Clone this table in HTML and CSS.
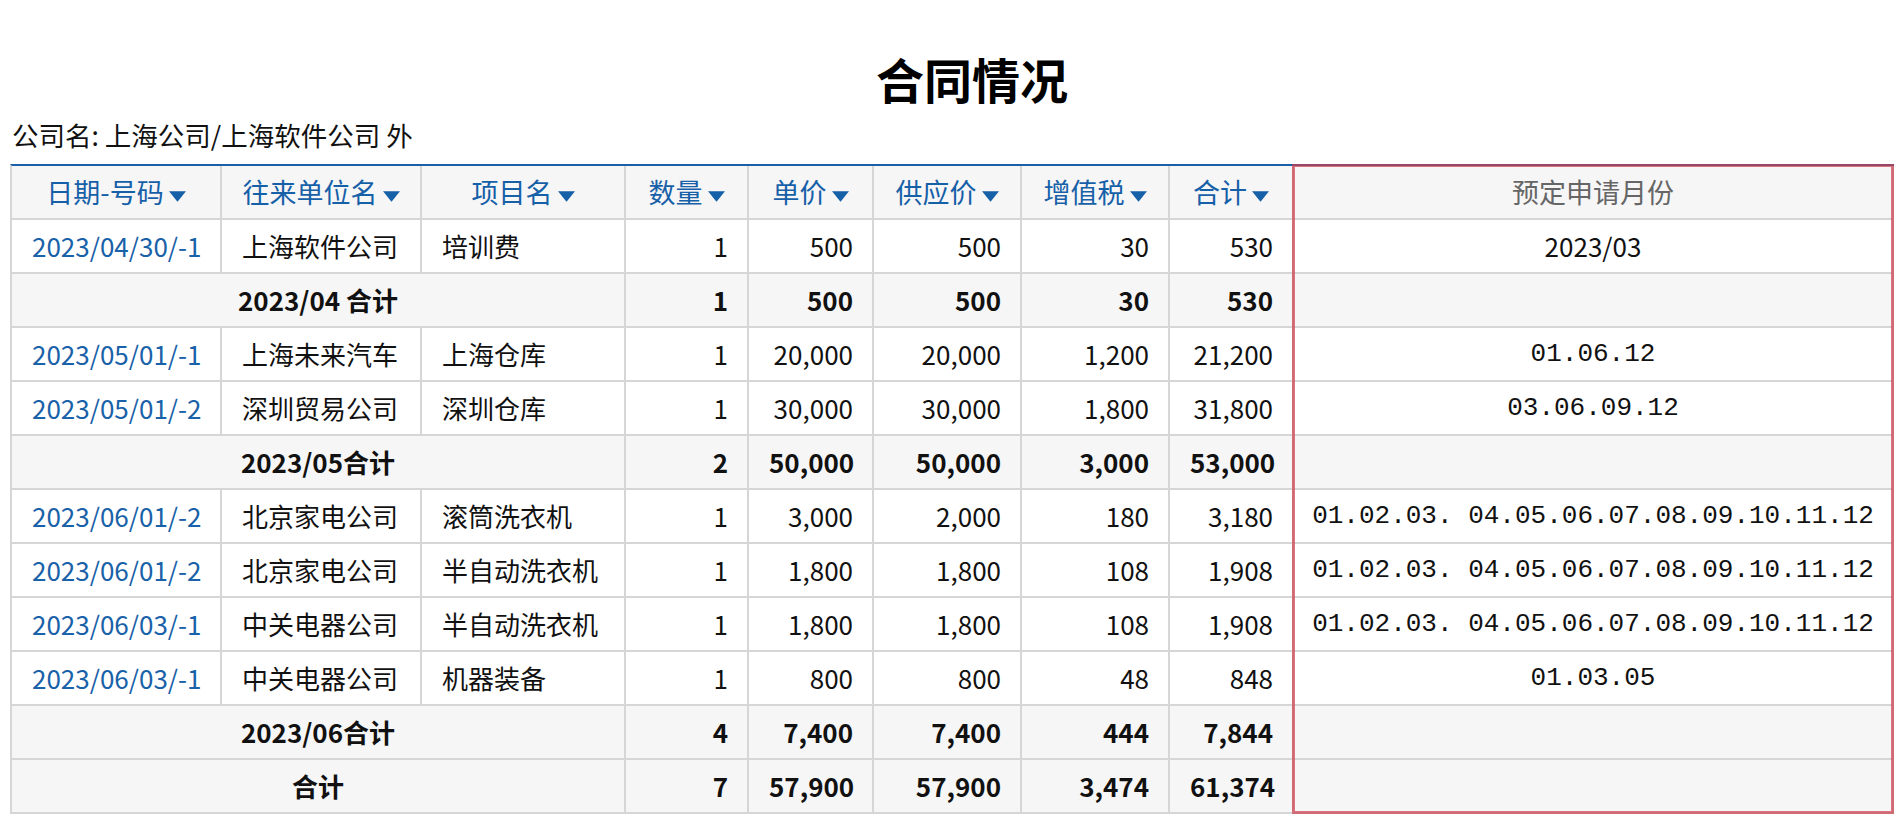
FILE: index.html
```html
<!DOCTYPE html>
<html lang="zh-CN">
<head>
<meta charset="utf-8">
<title>合同情况</title>
<link rel="stylesheet" href="styles.css">
</head>
<body>
<div class="page">
  <h1 class="title">合同情况</h1>
  <div class="company">公司名: 上海公司/上海软件公司 外</div>
  <div class="table-wrap">
    <table class="grid">
      <colgroup>
        <col class="w-date"><col class="w-partner"><col class="w-item"><col class="w-qty"><col class="w-price"><col class="w-supply"><col class="w-tax"><col class="w-total"><col class="w-month">
      </colgroup>
      <thead>
        <tr>
          <th>日期-号码<svg class="caret" viewBox="0 0 16 10"><path d="M0 0H16L8 10Z"/></svg></th>
          <th>往来单位名<svg class="caret" viewBox="0 0 16 10"><path d="M0 0H16L8 10Z"/></svg></th>
          <th>项目名<svg class="caret" viewBox="0 0 16 10"><path d="M0 0H16L8 10Z"/></svg></th>
          <th>数量<svg class="caret" viewBox="0 0 16 10"><path d="M0 0H16L8 10Z"/></svg></th>
          <th>单价<svg class="caret" viewBox="0 0 16 10"><path d="M0 0H16L8 10Z"/></svg></th>
          <th>供应价<svg class="caret" viewBox="0 0 16 10"><path d="M0 0H16L8 10Z"/></svg></th>
          <th>增值税<svg class="caret" viewBox="0 0 16 10"><path d="M0 0H16L8 10Z"/></svg></th>
          <th>合计<svg class="caret" viewBox="0 0 16 10"><path d="M0 0H16L8 10Z"/></svg></th>
          <th class="plain">预定申请月份</th>
        </tr>
      </thead>
      <tbody>
        <tr>
          <td class="link">2023/04/30/-1</td><td>上海软件公司</td><td>培训费</td>
          <td class="num">1</td><td class="num">500</td><td class="num">500</td><td class="num">30</td><td class="num">530</td>
          <td class="month">2023/03</td>
        </tr>
        <tr class="sum">
          <td colspan="3" class="label">2023/04 合计</td>
          <td class="num">1</td><td class="num">500</td><td class="num">500</td><td class="num">30</td><td class="num">530</td>
          <td class="month"></td>
        </tr>
        <tr>
          <td class="link">2023/05/01/-1</td><td>上海未来汽车</td><td>上海仓库</td>
          <td class="num">1</td><td class="num">20,000</td><td class="num">20,000</td><td class="num">1,200</td><td class="num">21,200</td>
          <td class="month mono">01.06.12</td>
        </tr>
        <tr>
          <td class="link">2023/05/01/-2</td><td>深圳贸易公司</td><td>深圳仓库</td>
          <td class="num">1</td><td class="num">30,000</td><td class="num">30,000</td><td class="num">1,800</td><td class="num">31,800</td>
          <td class="month mono">03.06.09.12</td>
        </tr>
        <tr class="sum">
          <td colspan="3" class="label">2023/05合计</td>
          <td class="num">2</td><td class="num">50,000</td><td class="num">50,000</td><td class="num">3,000</td><td class="num">53,000</td>
          <td class="month"></td>
        </tr>
        <tr>
          <td class="link">2023/06/01/-2</td><td>北京家电公司</td><td>滚筒洗衣机</td>
          <td class="num">1</td><td class="num">3,000</td><td class="num">2,000</td><td class="num">180</td><td class="num">3,180</td>
          <td class="month mono">01.02.03. 04.05.06.07.08.09.10.11.12</td>
        </tr>
        <tr>
          <td class="link">2023/06/01/-2</td><td>北京家电公司</td><td>半自动洗衣机</td>
          <td class="num">1</td><td class="num">1,800</td><td class="num">1,800</td><td class="num">108</td><td class="num">1,908</td>
          <td class="month mono">01.02.03. 04.05.06.07.08.09.10.11.12</td>
        </tr>
        <tr>
          <td class="link">2023/06/03/-1</td><td>中关电器公司</td><td>半自动洗衣机</td>
          <td class="num">1</td><td class="num">1,800</td><td class="num">1,800</td><td class="num">108</td><td class="num">1,908</td>
          <td class="month mono">01.02.03. 04.05.06.07.08.09.10.11.12</td>
        </tr>
        <tr>
          <td class="link">2023/06/03/-1</td><td>中关电器公司</td><td>机器装备</td>
          <td class="num">1</td><td class="num">800</td><td class="num">800</td><td class="num">48</td><td class="num">848</td>
          <td class="month mono">01.03.05</td>
        </tr>
        <tr class="sum">
          <td colspan="3" class="label">2023/06合计</td>
          <td class="num">4</td><td class="num">7,400</td><td class="num">7,400</td><td class="num">444</td><td class="num">7,844</td>
          <td class="month"></td>
        </tr>
        <tr class="sum">
          <td colspan="3" class="label">合计</td>
          <td class="num">7</td><td class="num">57,900</td><td class="num">57,900</td><td class="num">3,474</td><td class="num">61,374</td>
          <td class="month"></td>
        </tr>
      </tbody>
    </table>
    <div class="highlight"></div>
  </div>
</div>
</body>
</html>
```

FILE: styles.css
```css
html, body {
  margin: 0;
  background: #ffffff;
}

body {
  font-family: "Noto Sans CJK SC", "Noto Sans", sans-serif;
  color: #111111;
}

.page {
  padding: 0 10px;
}

.title {
  margin: 0 0 5px;
  padding: 44px 0 0 40px;
  font-size: 48px;
  line-height: 68px;
  font-weight: 700;
  text-align: center;
  color: #000000;
}

.company {
  font-size: 26.5px;
  line-height: 36px;
  margin-bottom: 11px;
  padding-left: 2px;
  color: #111111;
}

.table-wrap {
  position: relative;
  width: 1884px;
}

.grid {
  border-collapse: separate;
  border-spacing: 0;
  table-layout: fixed;
  width: 1884px;
  border-top: 2px solid #1a60a8;
  border-left: 2px solid #d6d6d6;
  font-size: 26px;
}

.w-date { width: 210px; }
.w-partner { width: 200px; }
.w-item { width: 204px; }
.w-qty { width: 123px; }
.w-price { width: 125px; }
.w-supply { width: 148px; }
.w-tax { width: 148px; }
.w-total { width: 124px; }
.w-month { width: 600px; }

.grid th,
.grid td {
  box-sizing: border-box;
  height: 54px;
  padding: 0 20px;
  line-height: 30px;
  border-right: 2px solid #d6d6d6;
  border-bottom: 2px solid #d6d6d6;
  white-space: nowrap;
  vertical-align: middle;
}

.grid th {
  background: #f6f6f6;
  font-size: 27px;
  font-weight: 400;
  color: #1660a8;
  text-align: center;
  padding: 0 4px;
}

.grid th.plain {
  color: #666666;
}

.caret {
  width: 17px;
  height: 11px;
  margin-left: 5px;
  fill: #1660a8;
  vertical-align: 1px;
}

.grid td {
  text-align: left;
  color: #111111;
}

.grid td.link {
  color: #1961a8;
}

.grid td.num {
  text-align: right;
  padding-right: 19px;
}

.grid td.month {
  text-align: center;
  padding: 0 6px;
}

.grid td.mono {
  font-family: "Liberation Mono", monospace;
}

.grid tr.sum td {
  background: #f6f6f6;
  font-weight: 700;
}

.grid tr.sum td.label {
  text-align: center;
}

.highlight {
  position: absolute;
  top: 0;
  right: 0;
  bottom: 0;
  width: 602px;
  box-sizing: border-box;
  border: 3px solid rgba(205, 60, 75, 0.7);
  pointer-events: none;
}
```
